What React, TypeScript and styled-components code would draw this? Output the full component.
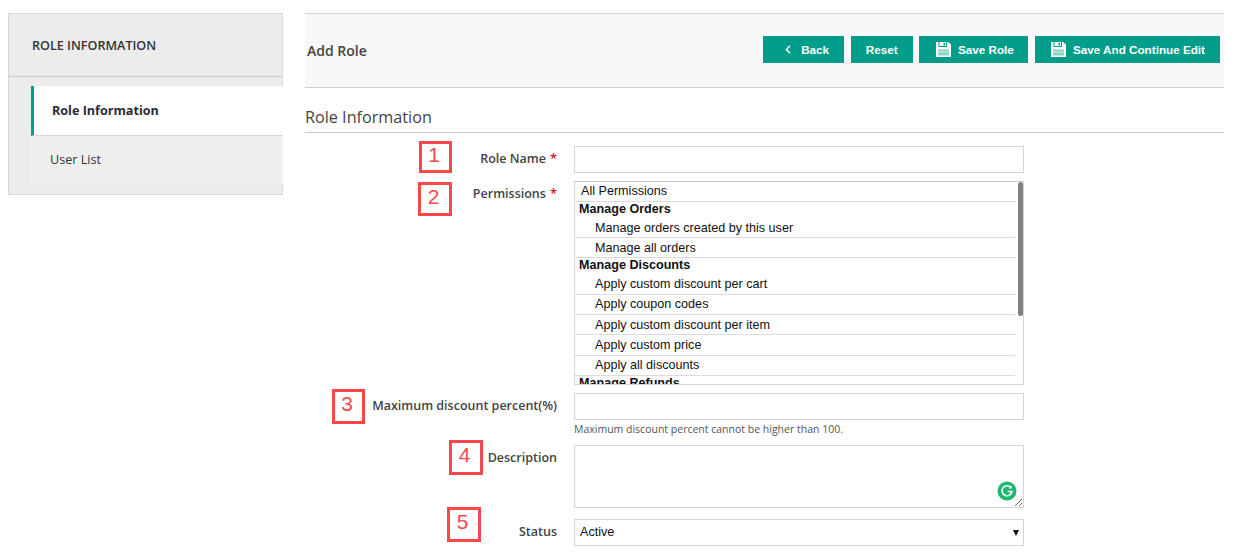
import React from 'react'
import styled, { createGlobalStyle } from 'styled-components'

const GlobalStyle = createGlobalStyle`
  html, body {
    margin: 0;
    padding: 0;
    background: #fff;
    font-family: 'Open Sans', sans-serif;
    color: #333;
  }
  * {
    box-sizing: border-box;
  }
`

const Page = styled.div`
  position: relative;
  display: flex;
  align-items: flex-start;
  gap: 22px;
  width: 1241px;
  height: 553px;
  padding: 13px 17px 0 8px;
  overflow: hidden;
`

const Sidebar = styled.aside`
  flex: 0 0 275px;
  height: 182px;
  background: #ececec;
  border: 1px solid #d6d6dc;
`

const SidebarTitle = styled.div`
  height: 63px;
  padding: 0 23px;
  display: flex;
  align-items: center;
  border-bottom: 1px solid #c9c9c9;
  font-size: 12.6px;
  font-weight: 600;
  color: #333;
  margin-bottom: 9px;
`

const SideLink = styled.div<{ $active?: boolean }>`
  margin-left: 22px;
  margin-right: -1px;
  height: ${({ $active }) => ($active ? '50px' : '49px')};
  display: flex;
  align-items: center;
  font-size: 12.6px;
  font-weight: ${({ $active }) => ($active ? 700 : 400)};
  padding-left: ${({ $active }) => ($active ? '18px' : '19px')};
  padding-bottom: ${({ $active }) => ($active ? '0' : '2px')};
  color: ${({ $active }) => ($active ? '#2b2b36' : '#333')};
  background: ${({ $active }) => ($active ? '#fff' : '#efefef')};
  border-left: ${({ $active }) => ($active ? '3px solid #009e8a' : 'none')};
  border-bottom: ${({ $active }) => ($active ? '1px solid #d6d6dc' : 'none')};
`

const Main = styled.main`
  flex: 1;
  min-width: 0;
`

const Toolbar = styled.div`
  height: 75px;
  display: flex;
  align-items: center;
  justify-content: space-between;
  padding: 0 4px 0 2px;
  background: #f8f8f8;
  border-top: 1px solid #d2d2d2;
  border-bottom: 1px solid #d2d2d2;
`

const PageTitle = styled.h1`
  margin: 0;
  font-size: 14px;
  font-weight: 600;
  color: #444;
`

const Actions = styled.div`
  display: flex;
  gap: 6.67px;
  margin-bottom: 3px;
`

const ActionButton = styled.button<{ $width: number; $shift?: number }>`
  width: ${({ $width }) => $width}px;
  height: 27px;
  display: flex;
  align-items: center;
  justify-content: center;
  gap: 7px;
  padding: 0 0 0 ${({ $shift }) => $shift ?? 0}px;
  border: none;
  background: #009e8a;
  color: #fff;
  font-family: 'Liberation Sans', Arial, sans-serif;
  font-size: 11.7px;
  font-weight: 700;
`

const SectionTitle = styled.h2`
  margin: 0 0 13px;
  height: 45px;
  padding-top: 18px;
  border-bottom: 1px solid #c8c8c8;
  font-size: 16.2px;
  line-height: 22px;
  font-weight: 400;
  color: #444;
`

const Form = styled.div`
  display: flex;
  flex-direction: column;
`

const Row = styled.div<{ $gap: number }>`
  display: grid;
  grid-template-columns: 252px 450px;
  column-gap: 17px;
  margin-bottom: ${({ $gap }) => $gap}px;
`

const Label = styled.label<{ $top: number }>`
  text-align: right;
  font-size: 12.5px;
  font-weight: 600;
  line-height: 16px;
  color: #444;
  padding-top: ${({ $top }) => $top}px;
  white-space: nowrap;
`

const Required = styled.span`
  color: #d4122c;
  margin-left: 4px;
  font-size: 13px;
`

const TextInput = styled.input`
  display: block;
  width: 100%;
  height: 27px;
  border: 1px solid #d5d5de;
  background: #fff;
  outline: none;
`

const PermissionBox = styled.div`
  position: relative;
  height: 204px;
  overflow: hidden;
  border: 1px solid #d5d5de;
  border-top-color: #c9c9d2;
  padding-right: 8px;
  font-family: 'Liberation Sans', Arial, sans-serif;
  font-size: 12.6px;
  color: #111;
`

const Thumb = styled.div`
  position: absolute;
  top: 0;
  right: 0;
  width: 5px;
  height: 134px;
  border-radius: 3px;
  background: #808080;
`

const PermissionRow = styled.div<{
  $height: number
  $kind: 'all' | 'group' | 'item'
  $line?: boolean
  $nudge?: boolean
}>`
  height: ${({ $height }) => $height}px;
  line-height: ${({ $height, $line }) => $height - ($line ? 1 : 2)}px;
  padding-top: ${({ $nudge }) => ($nudge ? 1 : 0)}px;
  padding-left: ${({ $kind }) => ($kind === 'item' ? 20 : $kind === 'all' ? 6 : 4)}px;
  font-weight: ${({ $kind }) => ($kind === 'group' ? 700 : 400)};
  border-bottom: ${({ $line }) => ($line ? '1px solid #dcdcdc' : 'none')};
  white-space: nowrap;
`

const Hint = styled.div`
  font-size: 10.5px;
  line-height: 14px;
  height: 19px;
  padding-top: 2px;
  color: #555;
`

const AreaWrap = styled.div`
  position: relative;
  height: 63px;
`

const TextArea = styled.textarea`
  display: block;
  width: 100%;
  height: 63px;
  border: 1px solid #d5d5de;
  outline: none;
  background: #fff;
`

const GrammarlyBadge = styled.svg`
  position: absolute;
  right: 7px;
  bottom: 7px;
  width: 20px;
  height: 20px;
`

const SelectWrap = styled.div`
  position: relative;
  height: 27px;

  &::after {
    content: '';
    position: absolute;
    right: 5px;
    top: 11px;
    border-style: solid;
    border-width: 6px 3px 0;
    border-color: #111 transparent transparent;
  }
`

const Select = styled.select`
  appearance: none;
  display: block;
  width: 100%;
  height: 27px;
  padding: 0 5px 2px;
  border: 1px solid #d5d5de;
  border-radius: 0;
  background: #fff;
  font-family: 'Liberation Sans', Arial, sans-serif;
  font-size: 12.6px;
  color: #111;
  outline: none;
`

const Callout = styled.div<{ $left: number; $top: number; $width: number; $height: number }>`
  position: absolute;
  left: ${({ $left }) => $left}px;
  top: ${({ $top }) => $top}px;
  width: ${({ $width }) => $width}px;
  height: ${({ $height }) => $height}px;
  display: flex;
  align-items: center;
  justify-content: center;
  border: 3px solid #f9484c;
  background: #fff;
  color: #f9484c;
  font-family: 'Liberation Sans', Arial, sans-serif;
  font-size: 21px;
  line-height: 1;
  padding: 0 3px 6px 0;
`

const SaveIcon = () => (
  <svg width="15" height="15" viewBox="0 0 15 15">
    <path d="M0 0h2.5v5h8.5V0h1L15 2.5V15H0z" fill="#fff" />
    <rect x="3.5" y="0" width="6.5" height="4" fill="#fff" />
    <rect x="7.5" y="0.8" width="1.6" height="2.6" fill="#009e8a" />
    <rect x="2" y="7.5" width="11" height="6" fill="#8dd3c8" />
    <rect x="2" y="9.5" width="11" height="1" fill="#fff" opacity="0.6" />
  </svg>
)

const BackIcon = () => (
  <svg width="6" height="9" viewBox="0 0 6 9">
    <path d="M5 0.8L1.4 4.5 5 8.2" fill="none" stroke="#fff" strokeWidth="1.5" />
  </svg>
)

type Permission = {
  name: string
  kind: 'all' | 'group' | 'item'
  height: number
  line?: boolean
  nudge?: boolean
}

const permissions: Permission[] = [
  { name: 'All Permissions', kind: 'all', height: 20, line: true },
  { name: 'Manage Orders', kind: 'group', height: 17 },
  { name: 'Manage orders created by this user', kind: 'item', height: 19, line: true },
  { name: 'Manage all orders', kind: 'item', height: 20, line: true, nudge: true },
  { name: 'Manage Discounts', kind: 'group', height: 17 },
  { name: 'Apply custom discount per cart', kind: 'item', height: 20, line: true },
  { name: 'Apply coupon codes', kind: 'item', height: 20, line: true },
  { name: 'Apply custom discount per item', kind: 'item', height: 20, line: true, nudge: true },
  { name: 'Apply custom price', kind: 'item', height: 21, line: true },
  { name: 'Apply all discounts', kind: 'item', height: 20, line: true },
  { name: 'Manage Refunds', kind: 'group', height: 17 },
]

export default function App() {
  return (
    <>
      <GlobalStyle />
      <Page>
        <Sidebar>
          <SidebarTitle>ROLE INFORMATION</SidebarTitle>
          <SideLink $active>Role Information</SideLink>
          <SideLink>User List</SideLink>
        </Sidebar>
        <Main>
          <Toolbar>
            <PageTitle>Add Role</PageTitle>
            <Actions>
              <ActionButton $width={81} $shift={7}>
                <BackIcon />
                &nbsp;Back
              </ActionButton>
              <ActionButton $width={62}>Reset</ActionButton>
              <ActionButton $width={109} $shift={2}>
                <SaveIcon />
                Save Role
              </ActionButton>
              <ActionButton $width={185} $shift={1}>
                <SaveIcon />
                Save And Continue Edit
              </ActionButton>
            </Actions>
          </Toolbar>
          <SectionTitle>Role Information</SectionTitle>
          <Form>
            <Row $gap={8}>
              <Label $top={4}>
                Role Name<Required>*</Required>
              </Label>
              <TextInput type="text" />
            </Row>
            <Row $gap={8}>
              <Label $top={4}>
                Permissions<Required>*</Required>
              </Label>
              <PermissionBox>
                {permissions.map((p) => (
                  <PermissionRow
                    key={p.name}
                    $kind={p.kind}
                    $height={p.height}
                    $line={p.line}
                    $nudge={p.nudge}
                  >
                    {p.name}
                  </PermissionRow>
                ))}
                <Thumb />
              </PermissionBox>
            </Row>
            <Row $gap={0}>
              <Label $top={5}>Maximum discount percent(%)</Label>
              <TextInput type="text" />
            </Row>
            <Row $gap={6}>
              <span />
              <Hint>Maximum discount percent cannot be higher than 100.</Hint>
            </Row>
            <Row $gap={11}>
              <Label $top={5}>Description</Label>
              <AreaWrap>
                <TextArea />
                <GrammarlyBadge viewBox="0 0 20 20">
                  <circle cx="10" cy="10" r="9.5" fill="#1fb673" />
                  <path
                    d="M14 6.6A5 5 0 1 0 15 10.5h-4.2"
                    fill="none"
                    stroke="#fff"
                    strokeWidth="1.6"
                  />
                  <path d="M14.6 4.6v3h-3z" fill="#fff" />
                </GrammarlyBadge>
              </AreaWrap>
            </Row>
            <Row $gap={0}>
              <Label $top={5}>Status</Label>
              <SelectWrap>
                <Select defaultValue="Active">
                  <option>Active</option>
                  <option>Inactive</option>
                </Select>
              </SelectWrap>
            </Row>
          </Form>
        </Main>
        <Callout $left={419} $top={141} $width={33} $height={32}>1</Callout>
        <Callout $left={418} $top={182} $width={34} $height={34}>2</Callout>
        <Callout $left={332} $top={389} $width={33} $height={35}>3</Callout>
        <Callout $left={449} $top={440} $width={34} $height={35}>4</Callout>
        <Callout $left={447} $top={507} $width={34} $height={35}>5</Callout>
      </Page>
    </>
  )
}
